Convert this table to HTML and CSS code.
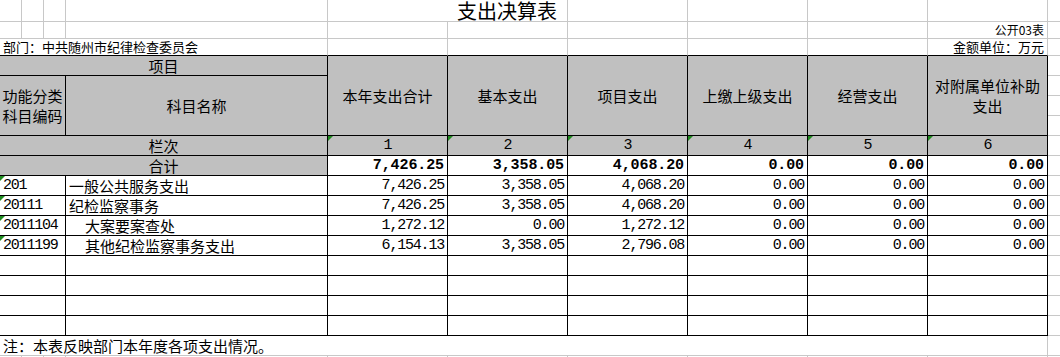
FILE: index.html
```html
<!DOCTYPE html>
<html lang="zh-CN">
<head>
<meta charset="utf-8">
<title>支出决算表</title>
<link rel="stylesheet" href="styles.css">
</head>
<body>
<div class="sheet">
  <!-- row 1 -->
  <div class="c"></div><div class="c"></div><div class="c"></div><div class="c"></div>
  <div class="c title">支出决算表</div>
  <div class="c"></div><div class="c"></div><div class="c"></div><div class="c"></div>
  <div class="c k"></div>
  <!-- row 2 -->
  <div class="c"></div><div class="c"></div><div class="c"></div><div class="c"></div><div class="c"></div>
  <div class="c"></div><div class="c"></div><div class="c"></div><div class="c"></div>
  <div class="c right small">公开03表</div>
  <div class="c k"></div>
  <!-- row 3 -->
  <div class="c s4 bb dept">部门：中共随州市纪律检查委员会</div>
  <div class="c bb"></div><div class="c bb"></div><div class="c bb"></div><div class="c bb"></div><div class="c bb"></div>
  <div class="c bb right unit">金额单位：万元</div>
  <div class="c k"></div>
  <!-- header -->
  <div class="c s4 t hd ctr">项目</div>
  <div class="c rs4 t hd ctr">本年支出合计</div>
  <div class="c rs4 t hd ctr">基本支出</div>
  <div class="c rs4 t hd ctr">项目支出</div>
  <div class="c rs4 t hd ctr">上缴上级支出</div>
  <div class="c rs4 t hd ctr">经营支出</div>
  <div class="c rs4 t hd ctr"><span>对附属单位补助<br>支出</span></div>
  <div class="c k"></div>
  <div class="c s3 rs3 t hd ctr"><span>功能分类<br>科目编码</span></div>
  <div class="c rs3 t hd ctr">科目名称</div>
  <div class="c k"></div>
  <div class="c k"></div>
  <div class="c k"></div>
  <!-- 栏次 -->
  <div class="c s4 t hd ctr">栏次</div>
  <div class="c t hd ctr mono tri">1</div>
  <div class="c t hd ctr mono tri">2</div>
  <div class="c t hd ctr mono tri">3</div>
  <div class="c t hd ctr mono tri">4</div>
  <div class="c t hd ctr mono tri">5</div>
  <div class="c t hd ctr mono tri">6</div>
  <div class="c k"></div>
  <!-- 合计 -->
  <div class="c s4 t hd ctr">合计</div>
  <div class="c t num bold">7,426.25</div>
  <div class="c t num bold">3,358.05</div>
  <div class="c t num bold">4,068.20</div>
  <div class="c t num bold">0.00</div>
  <div class="c t num bold">0.00</div>
  <div class="c t num bold">0.00</div>
  <div class="c k"></div>
  <!-- data -->
  <div class="c s3 t code tri">201</div>
  <div class="c t name">一般公共服务支出</div>
  <div class="c t num">7,426.25</div>
  <div class="c t num">3,358.05</div>
  <div class="c t num">4,068.20</div>
  <div class="c t num">0.00</div>
  <div class="c t num">0.00</div>
  <div class="c t num">0.00</div>
  <div class="c k"></div>

  <div class="c s3 t code tri">20111</div>
  <div class="c t name">纪检监察事务</div>
  <div class="c t num">7,426.25</div>
  <div class="c t num">3,358.05</div>
  <div class="c t num">4,068.20</div>
  <div class="c t num">0.00</div>
  <div class="c t num">0.00</div>
  <div class="c t num">0.00</div>
  <div class="c k"></div>

  <div class="c s3 t code tri">2011104</div>
  <div class="c t name indent">大案要案查处</div>
  <div class="c t num">1,272.12</div>
  <div class="c t num">0.00</div>
  <div class="c t num">1,272.12</div>
  <div class="c t num">0.00</div>
  <div class="c t num">0.00</div>
  <div class="c t num">0.00</div>
  <div class="c k"></div>

  <div class="c s3 t code tri">2011199</div>
  <div class="c t name indent">其他纪检监察事务支出</div>
  <div class="c t num">6,154.13</div>
  <div class="c t num">3,358.05</div>
  <div class="c t num">2,796.08</div>
  <div class="c t num">0.00</div>
  <div class="c t num">0.00</div>
  <div class="c t num">0.00</div>
  <div class="c k"></div>
  <!-- empty rows -->
  <div class="c s3 t"></div><div class="c t"></div>
  <div class="c t"></div><div class="c t"></div><div class="c t"></div><div class="c t"></div><div class="c t"></div><div class="c t"></div>
  <div class="c k"></div>
  <div class="c s3 t"></div><div class="c t"></div>
  <div class="c t"></div><div class="c t"></div><div class="c t"></div><div class="c t"></div><div class="c t"></div><div class="c t"></div>
  <div class="c k"></div>
  <div class="c s3 t"></div><div class="c t"></div>
  <div class="c t"></div><div class="c t"></div><div class="c t"></div><div class="c t"></div><div class="c t"></div><div class="c t"></div>
  <div class="c k"></div>
  <div class="c s3 t"></div><div class="c t"></div>
  <div class="c t"></div><div class="c t"></div><div class="c t"></div><div class="c t"></div><div class="c t"></div><div class="c t"></div>
  <div class="c k"></div>
  <!-- note -->
  <div class="c s10 note">注：本表反映部门本年度各项支出情况。</div>
  <div class="c k"></div>
  <!-- last partial row -->
  <div class="c"></div><div class="c"></div><div class="c"></div><div class="c"></div><div class="c"></div>
  <div class="c"></div><div class="c"></div><div class="c"></div><div class="c"></div><div class="c"></div>
  <div class="c k"></div>
</div>
</body>
</html>
```

FILE: styles.css
```css
html, body {
  margin: 0;
  padding: 0;
  background: #ffffff;
  overflow: hidden;
}

body {
  font-family: "Noto Sans CJK SC", sans-serif;
  font-size: 15px;
  color: #000000;
}

.sheet {
  display: grid;
  grid-template-columns: 22px 22px 22px 262px repeat(6, 120px) 1fr;
  grid-template-rows: 22px 17px 17px repeat(16, 20px);
  width: 1060px;
  height: 357px;
  overflow: hidden;
}

.c {
  box-sizing: border-box;
  border-right: 1px solid #c8c8c8;
  border-bottom: 1px solid #c8c8c8;
  display: flex;
  align-items: center;
  white-space: nowrap;
  position: relative;
  line-height: 19px;
  min-width: 0;
}

.k { border-right: none; }

.hd { background: #c0c0c0; }

.t {
  border-right-color: #000000;
  border-bottom-color: #000000;
}

.bb { border-bottom-color: #000000; }

.ctr {
  justify-content: center;
  text-align: center;
}

.hd span { line-height: 20px; }

.right {
  justify-content: flex-end;
  padding-right: 3px;
}

.s3 { grid-column: span 3; }
.s4 { grid-column: span 4; }
.s10 { grid-column: span 10; }
.rs3 { grid-row: span 3; }
.rs4 { grid-row: span 4; }

.title {
  grid-column: span 2;
  justify-content: flex-end;
  padding-right: 10px;
  font-size: 20px;
  line-height: 21px;
}

.small {
  font-size: 12px;
  line-height: 16px;
}

.unit {
  font-size: 13px;
  line-height: 16px;
}

.dept {
  font-size: 13px;
  line-height: 16px;
  padding-left: 3px;
}

.mono,
.num,
.code {
  font-family: "Liberation Mono", monospace;
  font-size: 15px;
  letter-spacing: -1.2px;
}

.num {
  justify-content: flex-end;
  padding-right: 3px;
}

.bold {
  font-weight: bold;
  letter-spacing: -0.1px;
}

.code { padding-left: 3px; }

.name { padding-left: 3px; }

.indent { padding-left: 19px; }

.note { padding-left: 3px; }

.tri::before {
  content: "";
  position: absolute;
  left: 0;
  top: 0;
  width: 0;
  height: 0;
  border-top: 5px solid #1f8a1f;
  border-right: 5px solid transparent;
}
```
